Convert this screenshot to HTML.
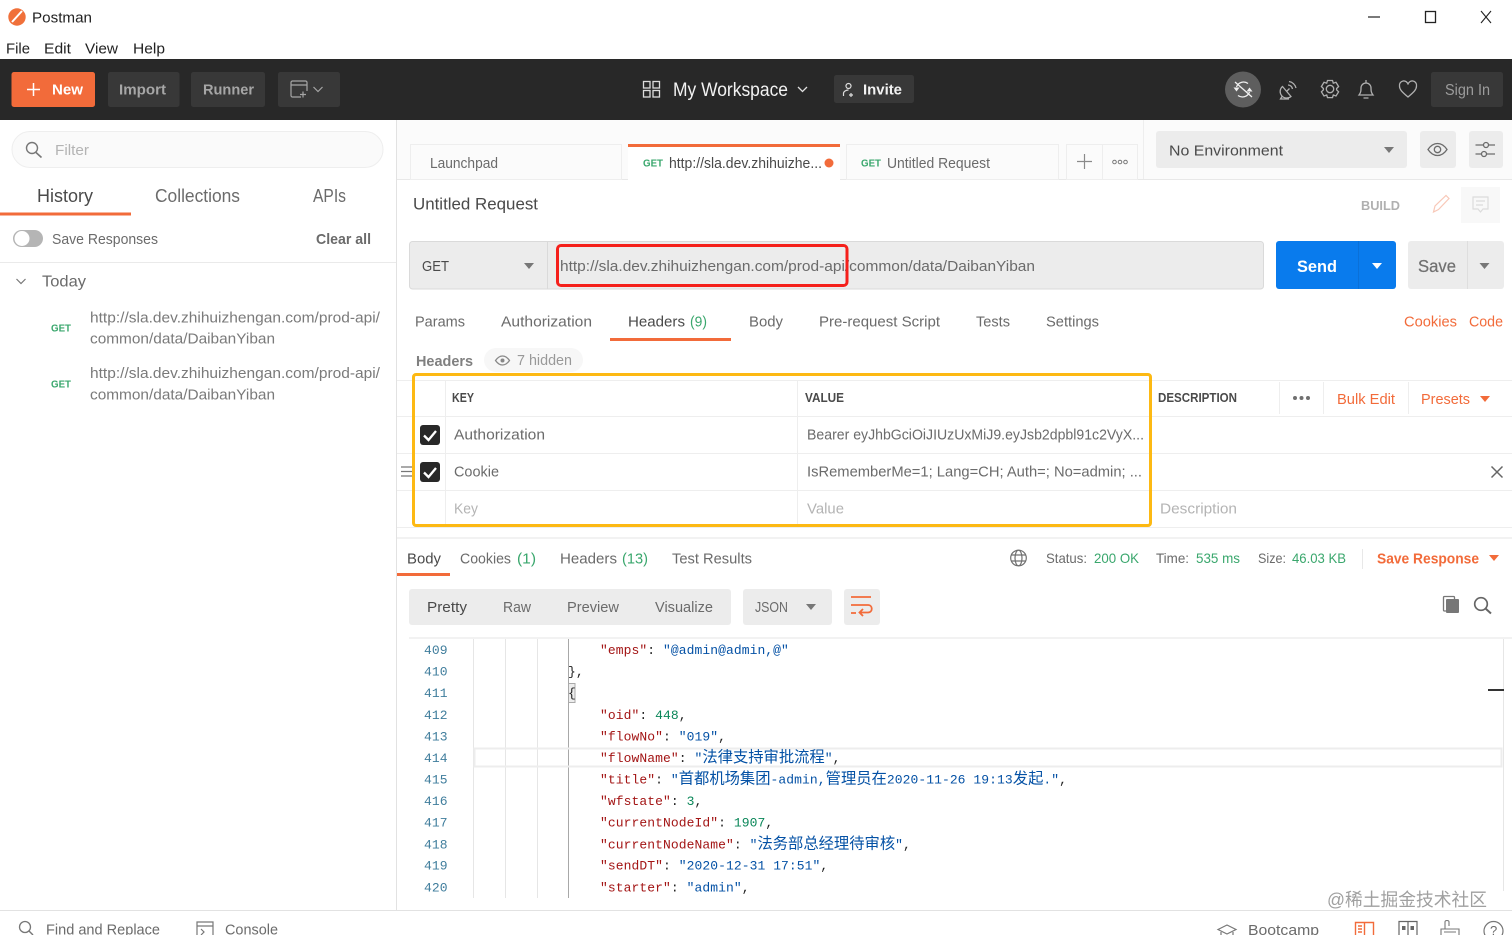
<!DOCTYPE html>
<html lang="en"><head><meta charset="utf-8"><title>Postman</title>
<style>
html,body{margin:0;padding:0;background:#fff;width:1512px;height:935px;overflow:hidden}
svg{display:block;filter:blur(.3px)}
text{font-family:"Liberation Sans","Noto Sans CJK SC",sans-serif;font-size:15px;fill:#6b6b6b;white-space:pre}
.d{fill:#4a4a4a}.o{fill:#f26b3a}.g{fill:#3aa76d}.l{fill:#b4b4b4}.b{font-weight:700}
.m text,text.m{font-family:"Liberation Mono","Noto Sans CJK SC",monospace;font-size:13px;letter-spacing:.07px}
.n{fill:#3f7d9c}.k{fill:#a31515}.s{fill:#0451a5}.u{fill:#098658}.p{fill:#222}
.c{font-family:"Noto Sans CJK SC",sans-serif;font-size:15.3px;letter-spacing:0;fill:#0451a5}
.i{fill:none;stroke:#6b6b6b;stroke-width:1.3}
</style></head><body>
<svg width="1512" height="935" viewBox="0 0 1512 935" xmlns="http://www.w3.org/2000/svg">
<!-- title bar -->
<circle cx="17" cy="17" r="8.7" fill="#f0703a"/><path d="M12 22L22 11" stroke="#fff" stroke-width="2"/>
<text x="32" y="22.500" textLength="60" lengthAdjust="spacingAndGlyphs" fill="#222" style="fill:#222">Postman</text>
<g style="fill:#222"><text x="6" y="53.500" textLength="24" lengthAdjust="spacingAndGlyphs" style="fill:#222">File</text>
<text x="44" y="53.500" textLength="27" lengthAdjust="spacingAndGlyphs" style="fill:#222">Edit</text>
<text x="85" y="53.500" textLength="33" lengthAdjust="spacingAndGlyphs" style="fill:#222">View</text>
<text x="133" y="53.500" textLength="32" lengthAdjust="spacingAndGlyphs" style="fill:#222">Help</text></g>
<path d="M1368 17H1380" stroke="#222" stroke-width="1.2"/>
<rect x="1425.500" y="11.500" width="10" height="11" fill="none" stroke="#222" stroke-width="1.3"/>
<path d="M1481 11L1491 23M1491 11L1481 23" stroke="#222" stroke-width="1.1"/>
<!-- header -->
<rect x="0" y="59" width="1512" height="61" fill="#282828"/>
<rect x="11.500" y="72" width="83.500" height="35" rx="2.500" fill="#f26b3a"/>
<path d="M27 89.500H40M33.500 83V96" stroke="#fff" stroke-width="1.500"/>
<text x="52" y="94.500" textLength="31" lengthAdjust="spacingAndGlyphs" class="b" style="fill:#fff">New</text>
<rect x="108" y="72" width="71.500" height="35" rx="2.500" fill="#383838"/>
<text x="119" y="94.500" textLength="47" lengthAdjust="spacingAndGlyphs" class="b" style="fill:#a6a6a6">Import</text>
<rect x="191" y="72" width="74" height="35" rx="2.500" fill="#383838"/>
<text x="203" y="94.500" textLength="51" lengthAdjust="spacingAndGlyphs" class="b" style="fill:#a6a6a6">Runner</text>
<rect x="278" y="72" width="62" height="35" rx="2.500" fill="#383838"/>
<path d="M301 97H292.500A1.500 1.500 0 0 1 291 95.500V82.500A1.500 1.500 0 0 1 292.500 81H305.500A1.500 1.500 0 0 1 307 82.500V91M291 85H307M300 94.500H306M303 91.500V97.500" fill="none" stroke="#a6a6a6" stroke-width="1.200"/>
<path d="M313.500 87L318 91.500L322.500 87" fill="none" stroke="#a6a6a6" stroke-width="1.200"/>
<g fill="none" stroke="#dcdcdc" stroke-width="1.300"><rect x="643.500" y="81.500" width="6.500" height="6.500"/><rect x="653" y="81.500" width="6.500" height="6.500"/><rect x="643.500" y="90.500" width="6.500" height="6.500"/><rect x="653" y="90.500" width="6.500" height="6.500"/></g>
<text x="673" y="96" textLength="115" lengthAdjust="spacingAndGlyphs" style="fill:#f2f2f2;font-size:19px">My Workspace</text>
<path d="M798 87L802.500 91.500L807 87" fill="none" stroke="#e0e0e0" stroke-width="1.300"/>
<rect x="834" y="75" width="80" height="28" rx="2.500" fill="#383838"/>
<circle cx="848.500" cy="86" r="2.500" fill="none" stroke="#ddd" stroke-width="1.200"/><path d="M843.500 96V93.500C843.500 91.500 846 90 848.500 90M851 93V97M849 95H853" fill="none" stroke="#ddd" stroke-width="1.200"/>
<text x="863" y="94.500" textLength="39" lengthAdjust="spacingAndGlyphs" class="b" style="fill:#f2f2f2">Invite</text>
<circle cx="1243" cy="89.500" r="18" fill="#5e5e5e"/>
<path d="M1236.500 87A7.500 7.500 0 0 1 1248 83.500M1249.500 92A7.500 7.500 0 0 1 1238 95.500M1235 82L1252 97" fill="none" stroke="#f0f0f0" stroke-width="1.300"/>
<path d="M1233.500 87.500H1239.500L1236.500 91.500ZM1246.500 91.500H1252.500L1249.500 87.500Z" fill="#f0f0f0"/>
<g fill="none" stroke="#b0b0b0" stroke-width="1.300">
<path d="M1282.500 86.500A6.500 6.500 0 0 0 1291 96.500ZM1282 96.500L1280.500 99H1289M1286.500 91.500L1289.500 88.500M1288 85A4.500 4.500 0 0 1 1292.500 89M1289 81.500A8.500 8.500 0 0 1 1296 88"/>
<circle cx="1330" cy="89" r="3.700"/><path d="M1327.500 80.500H1332.500L1333.300 83.200L1336 82.300L1338.600 86.500L1336.600 88.500V89.800L1338.600 91.800L1336 96L1333.300 95L1332.500 97.600H1327.500L1326.700 95L1324 96L1321.400 91.800L1323.400 89.800V88.500L1321.400 86.500L1324 82.300L1326.700 83.200Z"/>
<path d="M1359 95H1373C1371 92.500 1371 90.500 1371 88A5 5 0 0 0 1361 88C1361 90.500 1361 92.500 1359 95ZM1363.500 98H1368.500M1366 80V83"/>
<path d="M1408 97C1402 92 1399.500 89.500 1399.500 86A4.300 4.300 0 0 1 1408 84.500A4.300 4.300 0 0 1 1416.500 86C1416.500 89.500 1414 92 1408 97Z"/>
</g>
<rect x="1431" y="72" width="72" height="35" rx="2.500" fill="#383838"/>
<text x="1445" y="95" textLength="45" lengthAdjust="spacingAndGlyphs" style="fill:#9c9c9c;font-size:15.500px">Sign In</text>
<!-- sidebar -->
<rect x="396" y="120" width="1" height="790" fill="#e2e2e2"/>
<rect x="12" y="131.500" width="371" height="36" rx="18" fill="#fafafa" stroke="#eeeeee"/>
<circle cx="32" cy="148" r="5.500" fill="none" stroke="#777" stroke-width="1.400"/><path d="M36 152.500L41.500 157.500" stroke="#777" stroke-width="1.600"/>
<text x="55" y="155" textLength="34" lengthAdjust="spacingAndGlyphs" class="l">Filter</text>
<text x="37" y="202" textLength="56" lengthAdjust="spacingAndGlyphs" class="d" style="font-size:18px">History</text>
<text x="155" y="202" textLength="85" lengthAdjust="spacingAndGlyphs" style="font-size:18px">Collections</text>
<text x="313" y="202" textLength="33" lengthAdjust="spacingAndGlyphs" style="font-size:18px">APIs</text>
<rect x="0" y="212.500" width="131" height="3" fill="#f26b3a"/>
<rect x="13" y="230" width="30" height="17" rx="8.500" fill="#b5b5b5"/><circle cx="22" cy="238.500" r="7.500" fill="#fff"/>
<text x="52" y="244" textLength="106" lengthAdjust="spacingAndGlyphs">Save Responses</text>
<text x="316" y="244" textLength="55" lengthAdjust="spacingAndGlyphs" class="b">Clear all</text>
<rect x="0" y="262" width="396" height="1" fill="#eaeaea"/>
<path d="M16.500 279L21 283.500L25.500 279" fill="none" stroke="#777" stroke-width="1.200"/>
<text x="42" y="286.500" textLength="44" lengthAdjust="spacingAndGlyphs" style="font-size:16px">Today</text>
<text x="51" y="331.500" textLength="20" lengthAdjust="spacingAndGlyphs" class="g b" style="font-size:10px">GET</text>
<text x="90" y="322.500" textLength="290" lengthAdjust="spacingAndGlyphs" style="fill:#7a7a7a">http://sla.dev.zhihuizhengan.com/prod-api/</text>
<text x="90" y="343.500" textLength="185" lengthAdjust="spacingAndGlyphs" style="fill:#7a7a7a">common/data/DaibanYiban</text>
<text x="51" y="387.500" textLength="20" lengthAdjust="spacingAndGlyphs" class="g b" style="font-size:10px">GET</text>
<text x="90" y="378" textLength="290" lengthAdjust="spacingAndGlyphs" style="fill:#7a7a7a">http://sla.dev.zhihuizhengan.com/prod-api/</text>
<text x="90" y="399.500" textLength="185" lengthAdjust="spacingAndGlyphs" style="fill:#7a7a7a">common/data/DaibanYiban</text>
<!-- tabs -->
<rect x="397" y="120" width="1115" height="60" fill="#fbfbfb"/>
<rect x="397" y="179" width="1115" height="1" fill="#e8e8e8"/>
<rect x="410.500" y="144.500" width="211" height="35" fill="#fbfbfb" stroke="#eeeeee"/>
<text x="430" y="168" textLength="68" lengthAdjust="spacingAndGlyphs">Launchpad</text>
<rect x="628" y="144" width="212" height="36" fill="#fff"/><rect x="628" y="144" width="212" height="3" fill="#f26b3a"/>
<text x="643" y="166.500" textLength="20" lengthAdjust="spacingAndGlyphs" class="g b" style="font-size:10.500px">GET</text>
<text x="669" y="168" textLength="153" lengthAdjust="spacingAndGlyphs" class="d">http://sla.dev.zhihuizhe...</text>
<circle cx="829" cy="163" r="4.500" fill="#f26b3a"/>
<rect x="846.500" y="144.500" width="212" height="35" fill="#fbfbfb" stroke="#eeeeee"/>
<text x="861" y="166.500" textLength="20" lengthAdjust="spacingAndGlyphs" class="g b" style="font-size:10.500px">GET</text>
<text x="887" y="168" textLength="103" lengthAdjust="spacingAndGlyphs">Untitled Request</text>
<rect x="1066.500" y="144.500" width="71" height="35" fill="#fbfbfb" stroke="#eeeeee"/><rect x="1102" y="145" width="1" height="34" fill="#eeeeee"/>
<path d="M1077 161.500H1092M1084.500 154V169" stroke="#8a8a8a" stroke-width="1.200"/>
<g fill="none" stroke="#777" stroke-width="1"><circle cx="1114.500" cy="162" r="1.800"/><circle cx="1120" cy="162" r="1.800"/><circle cx="1125.500" cy="162" r="1.800"/></g>
<rect x="1143" y="120" width="1" height="59" fill="#eeeeee"/>
<rect x="1156" y="131" width="251" height="37" rx="3" fill="#ececec"/>
<text x="1169" y="155.500" textLength="114" lengthAdjust="spacingAndGlyphs" class="d">No Environment</text>
<path d="M1384 147H1394L1389 153Z" fill="#777"/>
<rect x="1420" y="131" width="36" height="37" rx="3" fill="#ececec"/>
<path d="M1428 149.500C1431 145 1434 143.500 1437.500 143.500C1441 143.500 1444 145 1447 149.500C1444 154 1441 155.500 1437.500 155.500C1434 155.500 1431 154 1428 149.500Z" class="i"/><circle cx="1437.500" cy="149.500" r="3.200" class="i"/>
<rect x="1469" y="131" width="34" height="37" rx="3" fill="#ececec"/>
<path d="M1475.500 145H1483M1489 145H1495M1475.500 154H1481M1487 154H1495" class="i"/><circle cx="1486" cy="145" r="2.500" class="i"/><circle cx="1484" cy="154" r="2.500" class="i"/>
<!-- request -->
<text x="413" y="209.500" textLength="125" lengthAdjust="spacingAndGlyphs" class="d" style="font-size:17px">Untitled Request</text>
<text x="1361" y="210" textLength="39" lengthAdjust="spacingAndGlyphs" class="b" style="fill:#b0b0b0;font-size:13px">BUILD</text>
<path d="M1433.500 212L1435 206L1446 195.500L1449 198.500L1438.500 209.500Z" fill="none" stroke="#f8c8b8" stroke-width="1.200"/>
<rect x="1461" y="187" width="39" height="36" fill="#f8f8f8"/>
<path d="M1473 197H1488V209H1483L1480.500 212L1478 209H1473ZM1476 201H1485M1476 205H1483" fill="none" stroke="#dcdcdc" stroke-width="1.200"/>
<rect x="409.500" y="241.500" width="854" height="47.500" rx="3" fill="#ececec" stroke="#dadada"/>
<rect x="547" y="242" width="1" height="47" fill="#dadada"/>
<text x="422" y="271" textLength="27" lengthAdjust="spacingAndGlyphs" class="d">GET</text>
<path d="M524 263H534L529 269Z" fill="#777"/>
<text x="560" y="271" textLength="475" lengthAdjust="spacingAndGlyphs">http://sla.dev.zhihuizhengan.com/prod-api/common/data/DaibanYiban</text>
<rect x="557.500" y="245.500" width="289.500" height="40" rx="3.500" fill="none" stroke="#f5201b" stroke-width="3"/>
<rect x="1276" y="241" width="120" height="48" rx="3" fill="#097bed"/>
<rect x="1358" y="241" width="1" height="48" fill="#0a70d8"/>
<text x="1297" y="272" textLength="40" lengthAdjust="spacingAndGlyphs" class="b" style="fill:#fff;font-size:17px">Send</text>
<path d="M1372 263H1382L1377 269Z" fill="#fff"/>
<rect x="1408" y="241" width="96" height="48" rx="3" fill="#ececec"/>
<rect x="1467" y="241" width="1" height="48" fill="#dedede"/>
<text x="1418" y="272" textLength="38" lengthAdjust="spacingAndGlyphs" style="fill:#707070;font-size:17.500px;stroke:#707070;stroke-width:.25">Save</text>
<path d="M1479.500 263H1489.500L1484.500 269Z" fill="#777"/>
<text x="415" y="326.500" textLength="50" lengthAdjust="spacingAndGlyphs">Params</text>
<text x="501" y="326.500" textLength="91" lengthAdjust="spacingAndGlyphs">Authorization</text>
<text x="628" y="326.500" textLength="57" lengthAdjust="spacingAndGlyphs" class="d">Headers</text>
<text x="690" y="326.500" textLength="17" lengthAdjust="spacingAndGlyphs" class="g">(9)</text>
<text x="749" y="326.500" textLength="34" lengthAdjust="spacingAndGlyphs">Body</text>
<text x="819" y="326.500" textLength="121" lengthAdjust="spacingAndGlyphs">Pre-request Script</text>
<text x="976" y="326.500" textLength="34" lengthAdjust="spacingAndGlyphs">Tests</text>
<text x="1046" y="326.500" textLength="53" lengthAdjust="spacingAndGlyphs">Settings</text>
<text x="1404" y="326.500" textLength="53" lengthAdjust="spacingAndGlyphs" class="o">Cookies</text>
<text x="1469" y="326.500" textLength="34" lengthAdjust="spacingAndGlyphs" class="o">Code</text>
<rect x="610" y="338" width="121" height="3" fill="#f26b3a"/>
<text x="416" y="366" textLength="57" lengthAdjust="spacingAndGlyphs" style="font-weight:700;fill:#808080">Headers</text>
<rect x="484" y="348" width="99" height="24" rx="12" fill="#f7f7f7"/>
<path d="M495.500 360.500C498 357 500 356 502.500 356C505 356 507 357 509.500 360.500C507 364 505 365 502.500 365C500 365 498 364 495.500 360.500Z" fill="none" stroke="#888" stroke-width="1.300"/><circle cx="502.500" cy="360.500" r="2" fill="#888"/>
<text x="517" y="365" textLength="55" lengthAdjust="spacingAndGlyphs" style="fill:#999">7 hidden</text>
<!-- table -->
<g fill="#eeeeee">
<rect x="397" y="380" width="1115" height="1"/><rect x="397" y="416" width="1115" height="1"/><rect x="397" y="453" width="1115" height="1"/><rect x="397" y="490" width="1115" height="1"/><rect x="397" y="527" width="1115" height="1"/>
<rect x="445" y="380" width="1" height="147"/><rect x="797" y="380" width="1" height="147"/>
<rect x="1279" y="382" width="1" height="32"/><rect x="1323" y="382" width="1" height="32"/><rect x="1408" y="382" width="1" height="32"/>
</g>
<rect x="397" y="537" width="1115" height="2" fill="#f2f2f2"/>
<text x="452" y="402" textLength="22" lengthAdjust="spacingAndGlyphs" class="b d" style="font-size:12.500px">KEY</text>
<text x="805" y="402" textLength="39" lengthAdjust="spacingAndGlyphs" class="b d" style="font-size:12.500px">VALUE</text>
<text x="1158" y="402" textLength="79" lengthAdjust="spacingAndGlyphs" class="b d" style="font-size:12.500px">DESCRIPTION</text>
<circle cx="1295" cy="398" r="2" fill="#707070"/><circle cx="1301.500" cy="398" r="2" fill="#707070"/><circle cx="1308" cy="398" r="2" fill="#707070"/>
<text x="1337" y="404" textLength="58" lengthAdjust="spacingAndGlyphs" class="o">Bulk Edit</text>
<text x="1421" y="404" textLength="49" lengthAdjust="spacingAndGlyphs" class="o">Presets</text>
<path d="M1480 396H1490L1485 402Z" fill="#f26b3a"/>
<rect x="420" y="425" width="20" height="20" rx="3" fill="#282828"/><path d="M424 435.500L428.500 440L436 431" fill="none" stroke="#fff" stroke-width="2.300"/>
<rect x="420" y="462" width="20" height="20" rx="3" fill="#282828"/><path d="M424 472.500L428.500 477L436 468" fill="none" stroke="#fff" stroke-width="2.300"/>
<path d="M401 467H412M401 471.500H412M401 476H412" stroke="#777" stroke-width="1.300"/>
<text x="454" y="439.500" textLength="91" lengthAdjust="spacingAndGlyphs">Authorization</text>
<text x="454" y="476.500" textLength="45" lengthAdjust="spacingAndGlyphs">Cookie</text>
<text x="454" y="513.500" textLength="24" lengthAdjust="spacingAndGlyphs" class="l">Key</text>
<text x="807" y="439.500" textLength="337" lengthAdjust="spacingAndGlyphs">Bearer eyJhbGciOiJIUzUxMiJ9.eyJsb2dpbl91c2VyX...</text>
<text x="807" y="476.500" textLength="335" lengthAdjust="spacingAndGlyphs">IsRememberMe=1; Lang=CH; Auth=; No=admin; ...</text>
<text x="807" y="513.500" textLength="37" lengthAdjust="spacingAndGlyphs" class="l">Value</text>
<text x="1160" y="513.500" textLength="77" lengthAdjust="spacingAndGlyphs" class="l">Description</text>
<path d="M1491.500 466.500L1502.500 477.500M1502.500 466.500L1491.500 477.500" stroke="#666" stroke-width="1.500"/>
<rect x="413.500" y="374.500" width="737" height="151" rx="2.500" fill="none" stroke="#fdb913" stroke-width="3"/>
<!-- response -->
<text x="407" y="563.500" textLength="34" lengthAdjust="spacingAndGlyphs" class="d">Body</text>
<rect x="397" y="573" width="53" height="3" fill="#f26b3a"/>
<text x="460" y="563.500" textLength="51" lengthAdjust="spacingAndGlyphs">Cookies</text>
<text x="517" y="563.500" textLength="19" lengthAdjust="spacingAndGlyphs" class="g">(1)</text>
<text x="560" y="563.500" textLength="57" lengthAdjust="spacingAndGlyphs">Headers</text>
<text x="622" y="563.500" textLength="26" lengthAdjust="spacingAndGlyphs" class="g">(13)</text>
<text x="672" y="563.500" textLength="80" lengthAdjust="spacingAndGlyphs">Test Results</text>
<g fill="none" stroke="#707070" stroke-width="1.200"><circle cx="1018.500" cy="558" r="7.800"/><ellipse cx="1018.500" cy="558" rx="3.500" ry="7.800"/><path d="M1011 555H1026M1011 561H1026"/></g>
<text x="1046" y="563" textLength="41" lengthAdjust="spacingAndGlyphs" style="font-size:14px">Status:</text>
<text x="1094" y="563" textLength="45" lengthAdjust="spacingAndGlyphs" class="g" style="font-size:14px">200 OK</text>
<text x="1156" y="563" textLength="33" lengthAdjust="spacingAndGlyphs" style="font-size:14px">Time:</text>
<text x="1196" y="563" textLength="44" lengthAdjust="spacingAndGlyphs" class="g" style="font-size:14px">535 ms</text>
<text x="1258" y="563" textLength="28" lengthAdjust="spacingAndGlyphs" style="font-size:14px">Size:</text>
<text x="1292" y="563" textLength="54" lengthAdjust="spacingAndGlyphs" class="g" style="font-size:14px">46.03 KB</text>
<rect x="1362" y="549" width="1" height="20" fill="#e8e8e8"/>
<text x="1377" y="563.500" textLength="102" lengthAdjust="spacingAndGlyphs" class="o b">Save Response</text>
<path d="M1489 555H1499L1494 561Z" fill="#f26b3a"/>
<rect x="409" y="589" width="322" height="36" rx="3" fill="#ececec"/>
<text x="427" y="612" textLength="40" lengthAdjust="spacingAndGlyphs" class="d">Pretty</text>
<text x="503" y="612" textLength="28" lengthAdjust="spacingAndGlyphs">Raw</text>
<text x="567" y="612" textLength="52" lengthAdjust="spacingAndGlyphs">Preview</text>
<text x="655" y="612" textLength="58" lengthAdjust="spacingAndGlyphs">Visualize</text>
<rect x="743" y="589" width="89" height="36" rx="3" fill="#ececec"/>
<text x="755" y="612" textLength="33" lengthAdjust="spacingAndGlyphs">JSON</text>
<path d="M806 604H816L811 610Z" fill="#777"/>
<rect x="844" y="589" width="36" height="36" rx="3" fill="#ececec"/>
<path d="M851 597H871M851 605H868C873 605 873 612.500 868 612.500H860M863 609L859.500 612.500L863 616M851 613H856" fill="none" stroke="#f26b3a" stroke-width="1.800"/>
<rect x="1443.500" y="596.500" width="11" height="14.500" rx="1" fill="none" stroke="#777" stroke-width="1.300"/><rect x="1446" y="599" width="13" height="14" rx="1" fill="#777"/>
<circle cx="1481" cy="604" r="6.300" fill="none" stroke="#666" stroke-width="1.700"/><path d="M1485.500 608.500L1491 613.500" stroke="#666" stroke-width="2"/>
<!-- editor -->
<rect x="409" y="637" width="1103" height="2" fill="#f2f2f2"/>
<g fill="#e6e6e6"><rect x="473" y="639" width="1" height="259"/><rect x="505" y="639" width="1" height="259"/><rect x="537" y="639" width="1" height="259"/></g>
<rect x="568" y="639" width="1" height="259" fill="#a8a8a8"/>
<rect x="474.500" y="748.500" width="1027" height="18" fill="none" stroke="#ededed" stroke-width="2"/>
<rect x="568.500" y="683.500" width="6.500" height="19" fill="#ededed" stroke="#aaa"/>
<rect x="1503" y="639" width="1" height="252" fill="#e6e6e6"/>
<rect x="1488" y="689" width="16" height="2" fill="#333"/>
<g class="m">
<text x="424" y="654" class="n">409</text><text x="424" y="675.500" class="n">410</text><text x="424" y="697" class="n">411</text><text x="424" y="719" class="n">412</text><text x="424" y="740.500" class="n">413</text><text x="424" y="762" class="n">414</text><text x="424" y="783.500" class="n">415</text><text x="424" y="805" class="n">416</text><text x="424" y="826.500" class="n">417</text><text x="424" y="848.500" class="n">418</text><text x="424" y="869.500" class="n">419</text><text x="424" y="891.500" class="n">420</text>
<text x="600" y="654"><tspan class="k">"emps"</tspan><tspan class="p">: </tspan><tspan class="s">"@admin@admin,@"</tspan></text>
<text x="568" y="675.500" class="p">},</text>
<text x="568" y="697" class="p">{</text>
<text x="600" y="719"><tspan class="k">"oid"</tspan><tspan class="p">: </tspan><tspan class="u">448</tspan><tspan class="p">,</tspan></text>
<text x="600" y="740.500"><tspan class="k">"flowNo"</tspan><tspan class="p">: </tspan><tspan class="s">"019"</tspan><tspan class="p">,</tspan></text>
<text x="600" y="762"><tspan class="k">"flowName"</tspan><tspan class="p">: </tspan><tspan class="s">"</tspan><tspan class="c">法律支持审批流程</tspan><tspan class="s">"</tspan><tspan class="p">,</tspan></text>
<text x="600" y="783.500"><tspan class="k">"title"</tspan><tspan class="p">: </tspan><tspan class="s">"</tspan><tspan class="c">首都机场集团</tspan><tspan class="s">-admin,</tspan><tspan class="c">管理员在</tspan><tspan class="s">2020-11-26 19:13</tspan><tspan class="c">发起</tspan><tspan class="s">."</tspan><tspan class="p">,</tspan></text>
<text x="600" y="805"><tspan class="k">"wfstate"</tspan><tspan class="p">: </tspan><tspan class="u">3</tspan><tspan class="p">,</tspan></text>
<text x="600" y="826.500"><tspan class="k">"currentNodeId"</tspan><tspan class="p">: </tspan><tspan class="u">1907</tspan><tspan class="p">,</tspan></text>
<text x="600" y="848.500"><tspan class="k">"currentNodeName"</tspan><tspan class="p">: </tspan><tspan class="s">"</tspan><tspan class="c">法务部总经理待审核</tspan><tspan class="s">"</tspan><tspan class="p">,</tspan></text>
<text x="600" y="869.500"><tspan class="k">"sendDT"</tspan><tspan class="p">: </tspan><tspan class="s">"2020-12-31 17:51"</tspan><tspan class="p">,</tspan></text>
<text x="600" y="891.500"><tspan class="k">"starter"</tspan><tspan class="p">: </tspan><tspan class="s">"admin"</tspan><tspan class="p">,</tspan></text>
</g>
<text x="1327" y="906" textLength="160" lengthAdjust="spacingAndGlyphs" style="fill:#a0a0a0;font-size:18px">@稀土掘金技术社区</text>
<!-- footer -->
<rect x="0" y="910" width="1512" height="1" fill="#e2e2e2"/>
<circle cx="25" cy="927" r="5.500" fill="none" stroke="#777" stroke-width="1.300"/><path d="M29 931L33 935" stroke="#777" stroke-width="1.400"/>
<text x="46" y="934.500" textLength="114" lengthAdjust="spacingAndGlyphs">Find and Replace</text>
<path d="M197 935V922H213V935M197 926H213M201 929L204 932L201 935" fill="none" stroke="#777" stroke-width="1.200"/>
<text x="225" y="934.500" textLength="53" lengthAdjust="spacingAndGlyphs">Console</text>
<path d="M1218 929.500L1227 925L1236 929.500L1227 934ZM1221 932V935M1233 932V935" fill="none" stroke="#777" stroke-width="1.200"/>
<text x="1248" y="935" textLength="71" lengthAdjust="spacingAndGlyphs">Bootcamp</text>
<path d="M1355.500 935V922.500H1373.500V935M1364.500 922.500V935M1358 926H1362M1358 929H1362M1358 932H1362" fill="none" stroke="#f26b3a" stroke-width="1.400"/>
<path d="M1399 935V921.500H1417V935M1408 921.500V935" fill="none" stroke="#666" stroke-width="1.200"/><rect x="1402" y="926" width="3.500" height="4" fill="#666"/><rect x="1410.500" y="926" width="3.500" height="4" fill="#666"/>
<path d="M1441 935V929H1459V935M1445 929V922C1445 920 1449 920 1449 922V926M1444 932H1456" fill="none" stroke="#777" stroke-width="1.100"/>
<circle cx="1493.500" cy="931" r="9.500" fill="none" stroke="#777" stroke-width="1.200"/>
<text x="1490" y="935" style="font-size:13px">?</text>
</svg>
</body></html>
